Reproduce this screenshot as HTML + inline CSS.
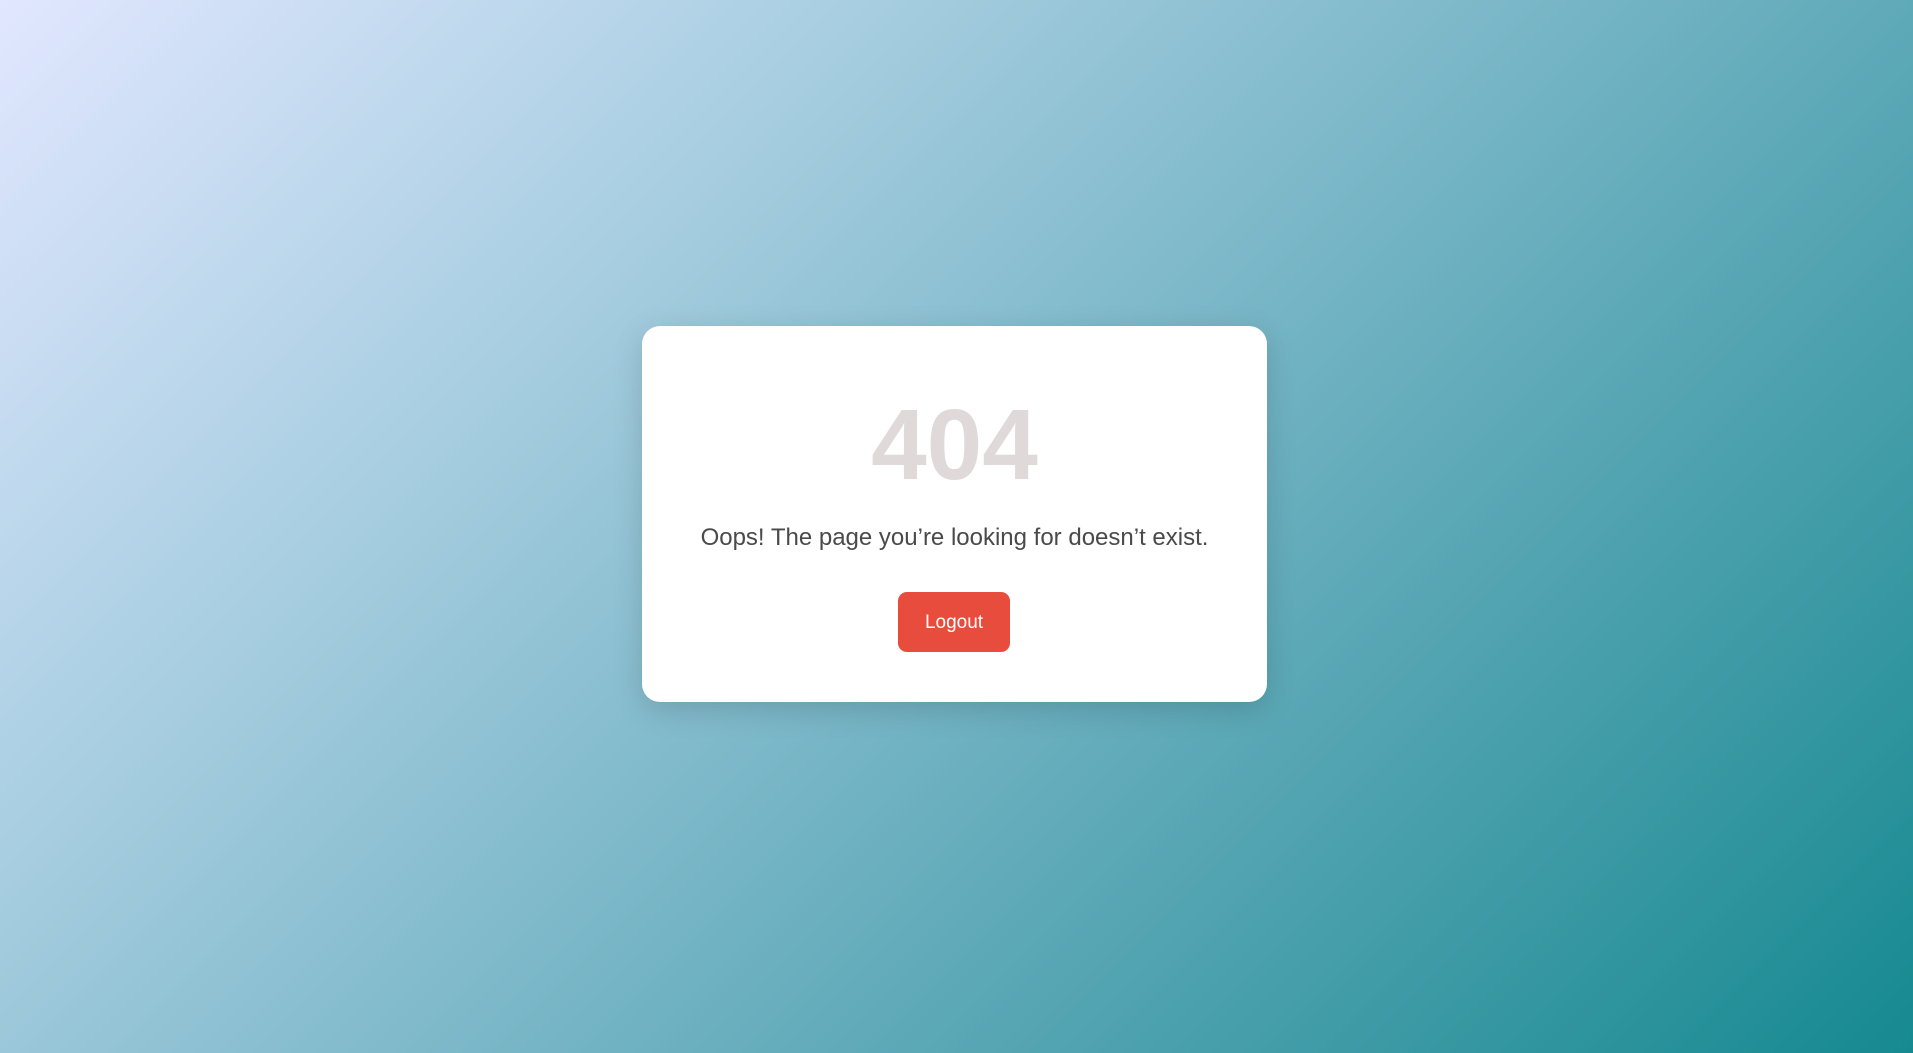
<!DOCTYPE html>
<html><head><style>
html,body{margin:0;height:100%;}
body{width:1913px;height:1053px;background:linear-gradient(135deg,#e1e7ff 0%,#a6cde0 30%,#5ea9b8 65%,#168990 100%);font-family:"Liberation Sans",sans-serif;position:relative;overflow:hidden}
.card{position:absolute;left:642px;top:326px;width:625px;height:376px;background:#fff;border-radius:18px;box-shadow:0 8px 30px rgba(0,0,0,0.15);text-align:center}
h1{margin:0;position:absolute;top:64px;left:0;right:0;font-size:100px;line-height:110px;font-weight:bold;color:#e0d9d9}
p{position:absolute;top:197px;left:0;right:0;margin:0;font-size:24px;line-height:30px;color:#4a4a4a}
.btn{position:absolute;left:256px;top:266px;width:112px;height:60px;background:#e74c3c;border-radius:9px;color:#fff;font-size:19px;line-height:62px}
</style></head><body>
<div class="card">
<h1>404</h1>
<p>Oops! The page you’re looking for doesn’t exist.</p>
<div class="btn">Logout</div>
</div>
</body></html>
